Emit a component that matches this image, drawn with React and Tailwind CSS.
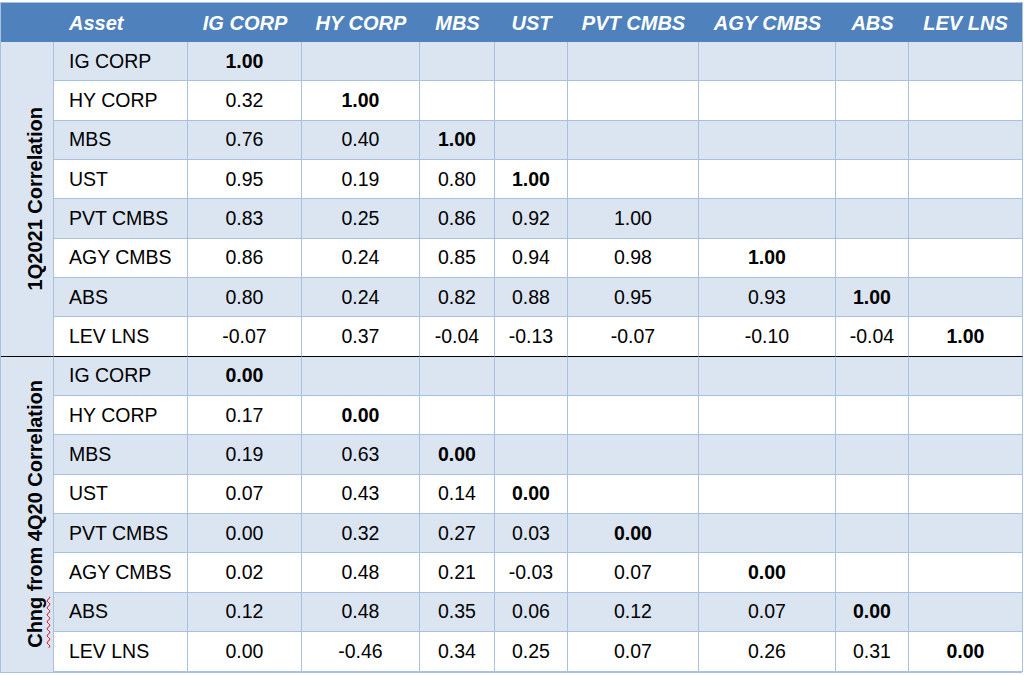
const headers = ["Asset", "IG CORP", "HY CORP", "MBS", "UST", "PVT CMBS", "AGY CMBS", "ABS", "LEV LNS"];

// value strings, a leading "*" marks a bold cell
const sections = [
  {
    title: "1Q2021 Correlation",
    rows: [
      ["IG CORP", "*1.00"],
      ["HY CORP", "0.32", "*1.00"],
      ["MBS", "0.76", "0.40", "*1.00"],
      ["UST", "0.95", "0.19", "0.80", "*1.00"],
      ["PVT CMBS", "0.83", "0.25", "0.86", "0.92", "1.00"],
      ["AGY CMBS", "0.86", "0.24", "0.85", "0.94", "0.98", "*1.00"],
      ["ABS", "0.80", "0.24", "0.82", "0.88", "0.95", "0.93", "*1.00"],
      ["LEV LNS", "-0.07", "0.37", "-0.04", "-0.13", "-0.07", "-0.10", "-0.04", "*1.00"],
    ],
  },
  {
    title: "Chng from 4Q20 Correlation",
    rows: [
      ["IG CORP", "*0.00"],
      ["HY CORP", "0.17", "*0.00"],
      ["MBS", "0.19", "0.63", "*0.00"],
      ["UST", "0.07", "0.43", "0.14", "*0.00"],
      ["PVT CMBS", "0.00", "0.32", "0.27", "0.03", "*0.00"],
      ["AGY CMBS", "0.02", "0.48", "0.21", "-0.03", "0.07", "*0.00"],
      ["ABS", "0.12", "0.48", "0.35", "0.06", "0.12", "0.07", "*0.00"],
      ["LEV LNS", "0.00", "-0.46", "0.34", "0.25", "0.07", "0.26", "0.31", "*0.00"],
    ],
  },
];

function SectionTitle({ title }) {
  if (title.startsWith("Chng")) {
    return (
      <span className="[writing-mode:vertical-rl] rotate-180 ml-[15px] font-bold text-[20px] whitespace-nowrap">
        <span className="underline decoration-wavy decoration-red-600 decoration-1 underline-offset-0">Chng</span> from 4Q20 Correlation
      </span>
    );
  }
  return (
    <span className="[writing-mode:vertical-rl] rotate-180 ml-[15px] font-bold text-[20px] whitespace-nowrap">
      {title}
    </span>
  );
}

export default function App() {
  return (
    <div className="bg-white w-[1024px] h-[675px] pt-[2px] font-['Liberation_Sans',Arial,sans-serif] text-black">
      <div className="grid w-[1022px] grid-cols-[53px_134px_114px_118px_75px_73px_131px_137px_73px_114px] grid-rows-[40px_repeat(16,39.35px)] border-l border-b border-[#a9c1df]">
        <div className="bg-[#4f81bd] border-t border-[#a9c1df]" />
        {headers.map((h, i) => (
          <div
            key={h}
            className={
              "bg-[#4f81bd] border-t border-[#a9c1df] text-white font-bold italic text-[20px] flex items-center " +
              (i === 0 ? "pl-[15px]" : "justify-center") +
              (i === headers.length - 1 ? " border-r" : "")
            }
          >
            {h}
          </div>
        ))}

        {sections.map((sec, si) =>
          sec.rows.map((row, ri) => {
            const band = ri % 2 === 0 ? "bg-[#dbe5f1]" : "bg-white";
            const last = ri === sec.rows.length - 1 && si === 0;
            const bottom = last ? "border-b border-b-black" : "border-b border-b-[#a9c1df]";
            const cells = [];
            if (ri === 0) {
              cells.push(
                <div
                  key={"t" + si}
                  className={
                    "row-span-8 bg-[#dbe5f1] border-r border-r-[#a9c1df] flex items-center justify-center " +
                    (si === 0 ? "border-b border-b-black" : "")
                  }
                >
                  <SectionTitle title={sec.title} />
                </div>
              );
            }
            cells.push(
              <div
                key={si + "-" + ri + "-n"}
                className={band + " " + bottom + " border-r border-r-[#a9c1df] flex items-center pl-[15px] text-[19.5px]"}
              >
                {row[0]}
              </div>
            );
            for (let c = 1; c <= 8; c++) {
              const raw = row[c] || "";
              const bold = raw.startsWith("*");
              cells.push(
                <div
                  key={si + "-" + ri + "-" + c}
                  className={
                    band + " " + bottom + " border-r border-r-[#a9c1df] flex items-center justify-center text-[19.5px] " +
                    (bold ? "font-bold" : "")
                  }
                >
                  {bold ? raw.slice(1) : raw}
                </div>
              );
            }
            return cells;
          })
        )}
      </div>
    </div>
  );
}
